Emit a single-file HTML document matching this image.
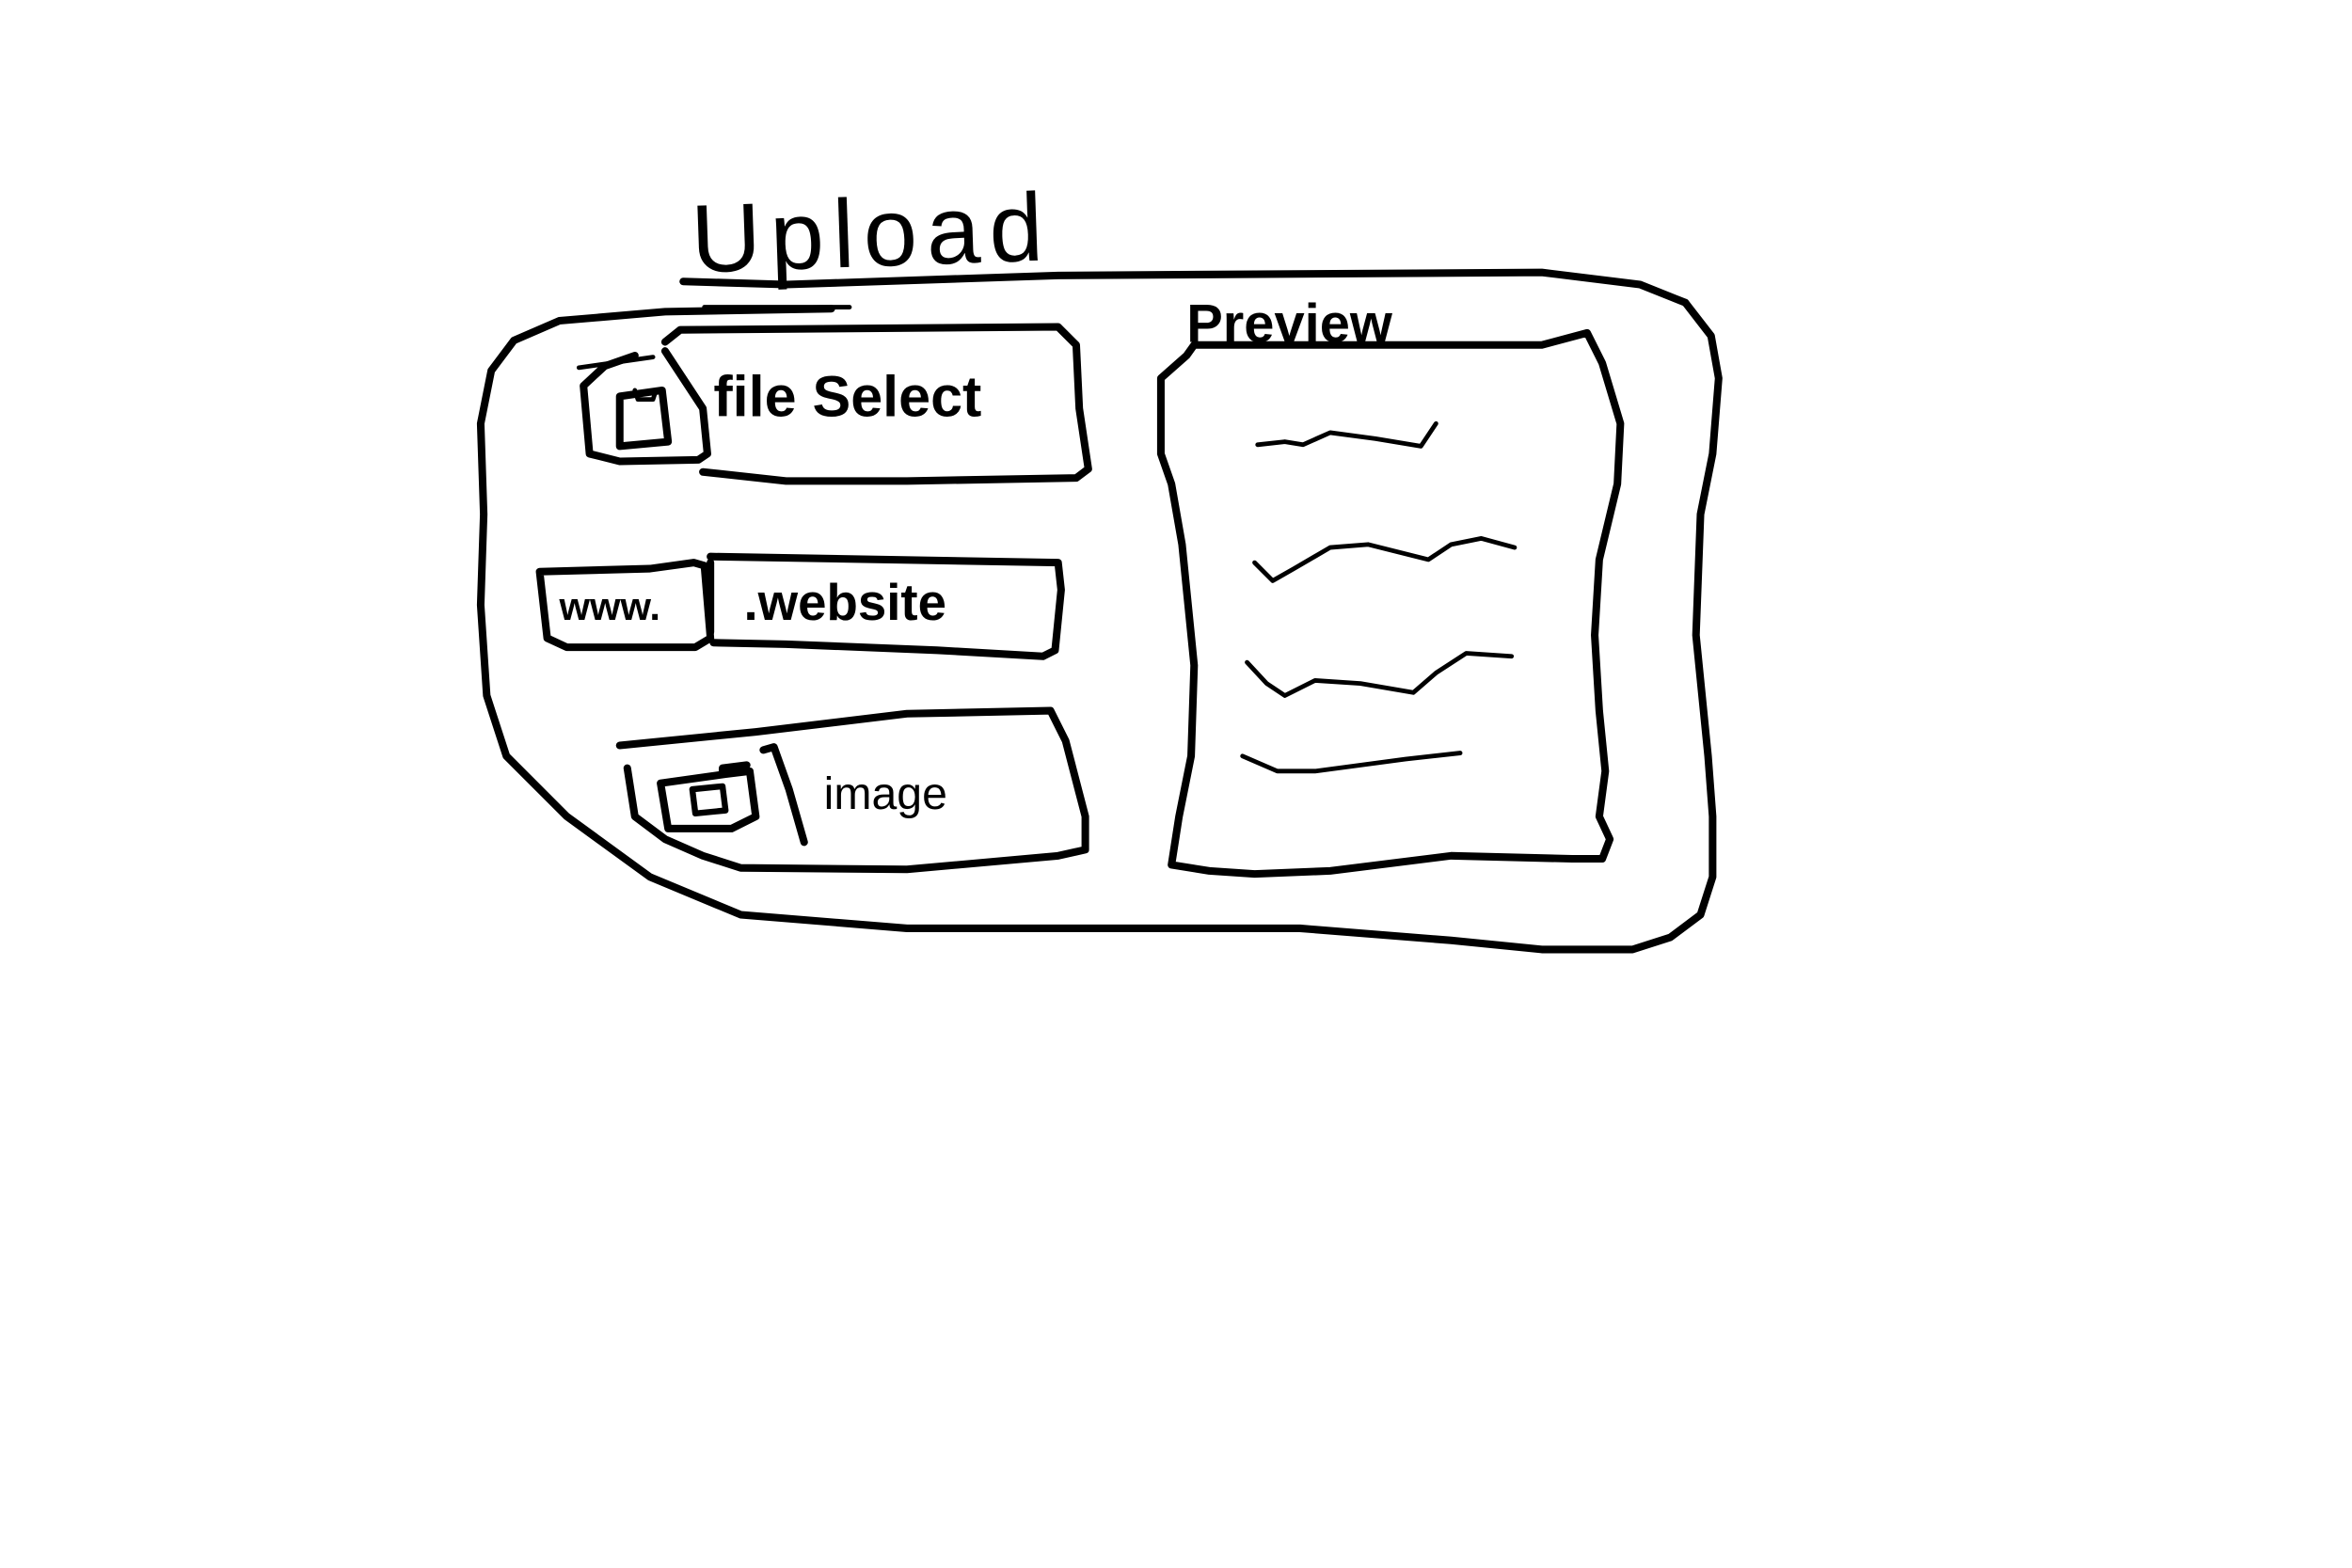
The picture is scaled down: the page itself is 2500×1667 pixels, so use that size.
<!DOCTYPE html>
<html><head><meta charset="utf-8"><style>
html,body{margin:0;padding:0;background:#fff;}
svg{display:block}
text{font-family:"Liberation Sans",sans-serif;fill:#000;}
</style></head><body>
<svg width="2500" height="1667" viewBox="0 0 1556 1037" xmlns="http://www.w3.org/2000/svg">
<g fill="none" stroke="#000" stroke-width="5" stroke-linecap="round" stroke-linejoin="round">
<path d="M452 186 L520 188 L700 182 L1020 180 L1085 188 L1115 200"/>
<path d="M466 203 L562 203" stroke-width="3"/>
<path d="M1115 200 L1132 222 L1137 250 L1133 300 L1125 340 L1122 420 L1130 500 L1133 540 L1133 580 L1125 605 L1105 620 L1080 628 L1020 628 L960 622 L860 614 L600 614 L490 605 L430 580 L375 540 L335 500 L322 460 L318 400 L320 340 L318 280 L325 245 L340 225 L370 212 L440 206 L550 204"/>
<path d="M440 232 L465 270 L468 300 L462 304 L410 305 L390 300 L386 255 L400 242 L420 235"/>
<path d="M383 243 L432 236" stroke-width="3"/>
<path d="M410 262 L438 258 L442 292 L410 295 Z"/>
<path d="M420 258 L422 264 L432 264 L434 258" stroke-width="3"/>
<path d="M440 226 L450 218 L700 216 L712 228 L714 270 L720 310 L712 316 L600 318 L520 318 L465 312"/>
<path d="M357 378 L362 422 L375 428 L460 428 L470 422 L466 374 L459 372 L430 376 L357 378 Z"/>
<path d="M470 372 L470 412 L470 418"/>
<path d="M470 368 L700 372 L702 390 L698 430 L690 434 L620 430 L520 426 L472 425"/>
<path d="M410 493 L500 484 L600 472 L695 470 L705 490 L718 540 L718 562 L700 566 L600 575 L490 574 L465 566 L440 555 L420 540 L415 508"/>
<path d="M437 518 L480 512 L496 510 L500 540 L484 548 L442 548 Z"/>
<path d="M458 522 L478 520 L480 536 L460 538 Z" stroke-width="4"/>
<path d="M478 512 L478 508 L494 506"/>
<path d="M505 496 L512 494 L522 522 L532 557" />
<path d="M790 228 L1020 228 L1050 220 L1060 240 L1072 280 L1070 320 L1058 370 L1055 420 L1058 470 L1062 510 L1058 540 L1065 555 L1060 568 L1040 568 L960 566 L880 576 L830 578 L800 576 L775 572 L780 540 L788 500 L790 440 L782 360 L775 320 L768 300 L768 250 L785 235 L790 228"/>
<path d="M832 294 L850 292 L862 294 L880 286 L910 290 L940 295 L950 280" stroke-width="3"/>
<path d="M830 372 L842 384 L856 376 L880 362 L905 360 L945 370 L960 360 L980 356 L1002 362" stroke-width="3"/>
<path d="M825 438 L838 452 L850 460 L870 450 L900 452 L935 458 L950 445 L970 432 L1000 434" stroke-width="3"/>
<path d="M822 500 L845 510 L870 510 L930 502 L966 498" stroke-width="3"/>
</g>
<text x="458" y="180" font-size="64" letter-spacing="6" transform="rotate(-2 458 180)">Upload</text>
<text x="472" y="275" font-size="38" font-weight="bold">file Select</text>
<text x="370" y="410" font-size="26" font-weight="bold">www.</text>
<text x="492" y="410" font-size="34" font-weight="bold">.website</text>
<text x="545" y="535" font-size="30">image</text>
<text x="785" y="226" font-size="36" font-weight="bold">Preview</text>
</svg>
</body></html>
